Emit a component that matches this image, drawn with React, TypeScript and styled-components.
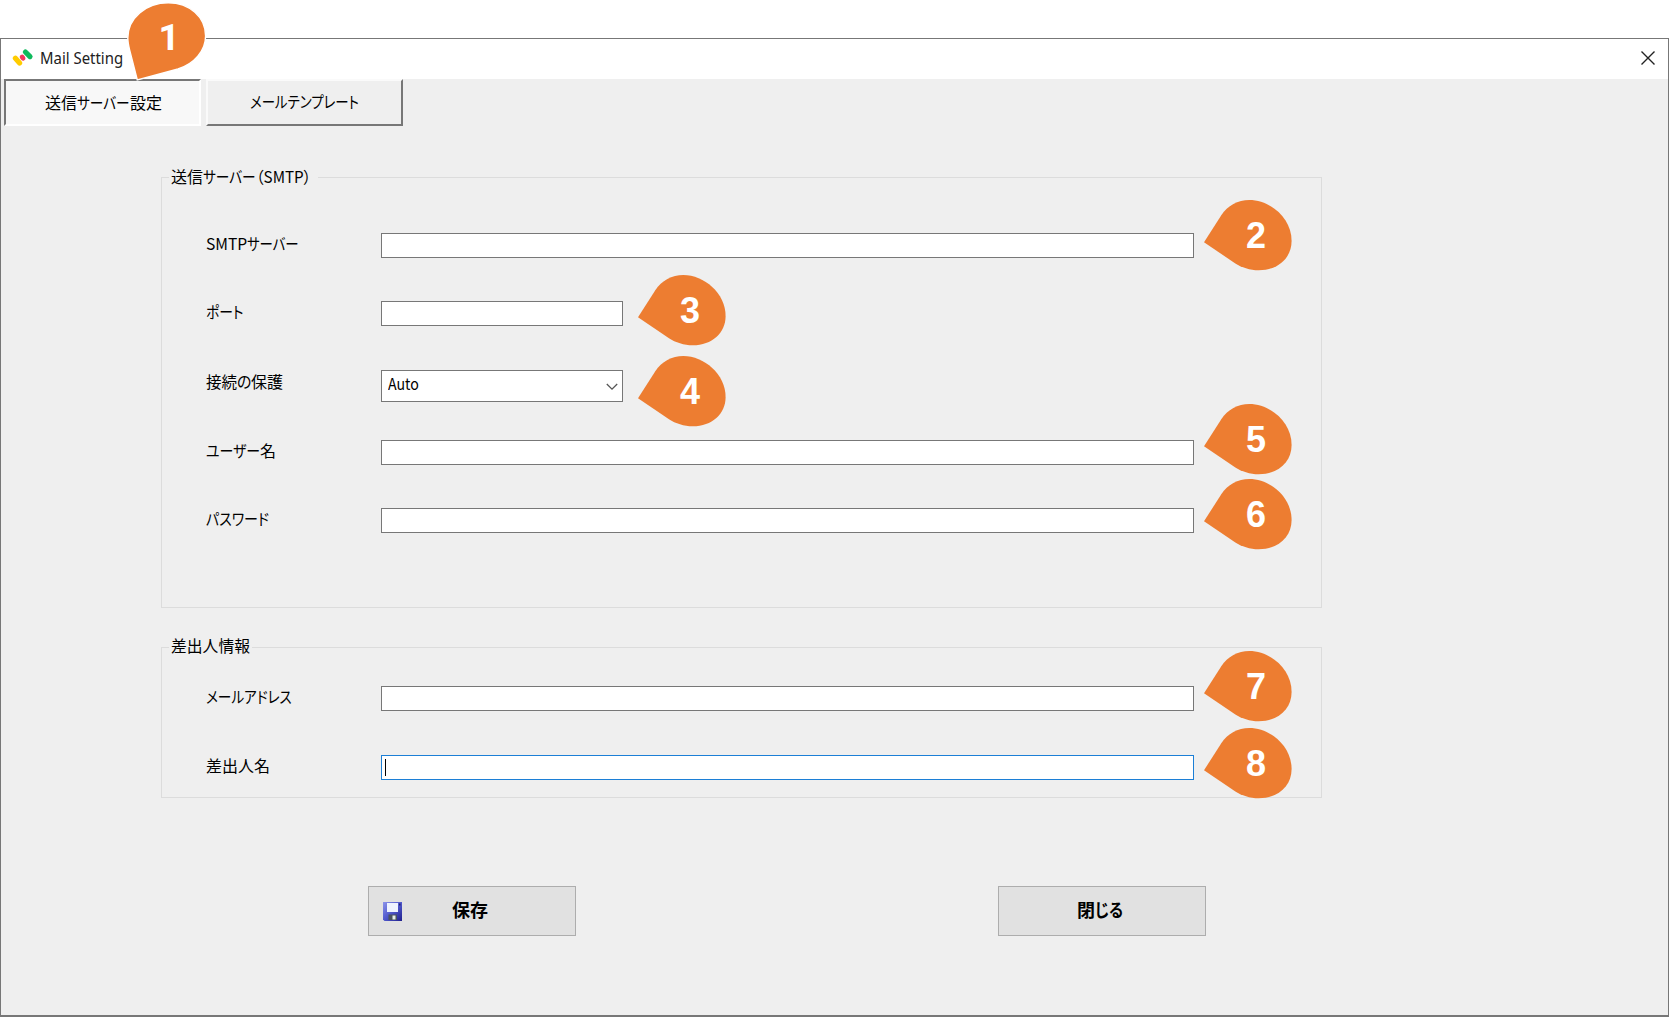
import React, { useLayoutEffect, useRef, useState } from 'react';
import styled, { createGlobalStyle, css } from 'styled-components';

const GlobalStyle = createGlobalStyle`
  * { box-sizing: border-box; }
  body {
    margin: 0;
    background: #fff;
    color: #000;
    font-family: "Noto Sans CJK JP", "Noto Sans", sans-serif;
    font-size: 16px;
  }
`;

const Page = styled.div`
  width: 1669px;
  height: 1017px;
  padding-top: 38px;
  overflow: hidden;
`;

const Window = styled.main`
  display: flex;
  flex-direction: column;
  height: 979px;
  background: #efefef;
  border: solid #777;
  border-width: 1px 1px 2px 1px;
`;

const TitleBar = styled.header`
  display: flex;
  align-items: center;
  flex: none;
  height: 40px;
  padding: 0 13px 2px 11px;
  background: #fff;
`;

const Title = styled.h1`
  flex: 1;
  display: flex;
  margin: 0 0 0 6px;
  font: 400 16px/22px "Noto Sans", sans-serif;
  color: #222;
`;

const CloseButton = styled.button`
  display: flex;
  padding: 0;
  border: 0;
  background: none;
`;

const Tabs = styled.nav`
  display: flex;
  flex: none;
  gap: 5px;
  height: 48px;
  padding-left: 3px;
`;

const Tab = styled.button<{ $active?: boolean }>`
  position: relative;
  display: flex;
  align-items: center;
  justify-content: center;
  width: 197px;
  height: 47px;
  color: #000;
  font: inherit;
  line-height: 24px;
  border: 2px solid;
  ${({ $active }) =>
    $active
      ? css`
          padding: 0 0 1px 2px;
          background: #f8f8f8;
          border-color: #777 #fff #fff #777;
        `
      : css`
          padding: 0 0 3px;
          background: #efefef;
          border-color: #fafafa #777 #777 #fafafa;
        `}
`;

const Group = styled.fieldset<{ $top: number; $height: number }>`
  display: flex;
  flex-direction: column;
  flex: none;
  width: 1161px;
  height: ${({ $height }) => $height}px;
  min-width: 0;
  margin: ${({ $top }) => $top}px 0 0 160px;
  padding: 0 0 0 43px;
  border: 1px solid #dcdcdc;
`;

const Legend = styled.div<{ $gap: number; $up: number; $after: number }>`
  display: flex;
  align-self: flex-start;
  flex: none;
  height: 24px;
  margin: -${({ $up }) => $up}px 0 ${({ $after }) => $after}px -36px;
  padding: 0 ${({ $gap }) => $gap}px 0 2px;
  line-height: 24px;
  background: #efefef;
`;

const Row = styled.div<{ $after: number }>`
  display: flex;
  flex: none;
  align-items: flex-start;
  margin-bottom: ${({ $after }) => $after}px;
`;

const Label = styled.label<{ $low?: boolean }>`
  display: flex;
  width: 176px;
  height: 24px;
  margin-top: ${({ $low }) => ($low ? -1 : -2)}px;
  padding-left: 1px;
  line-height: 24px;
`;

const Control = styled.div<{ $narrow?: boolean; $tall?: boolean; $focus?: boolean }>`
  position: relative;
  display: flex;
  align-items: center;
  width: ${({ $narrow }) => ($narrow ? 242 : 813)}px;
  height: ${({ $tall }) => ($tall ? 32 : 25)}px;
  background: #fff;
  border: 1px solid ${({ $focus }) => ($focus ? '#1c7fd6' : '#777')};
`;

const Caret = styled.span`
  width: 1px;
  height: 17px;
  margin-left: 3px;
  background: #000;
`;

const SelectValue = styled.span`
  display: flex;
  flex: 1;
  padding: 0 0 6px 6px;
  line-height: 24px;
`;

const Chevron = styled.svg`
  margin: 2px 4px 0 0;
`;

const Actions = styled.footer`
  display: flex;
  gap: 422px;
  margin: 88px 0 0 367px;
`;

const PushButton = styled.button`
  display: flex;
  align-items: center;
  width: 208px;
  height: 50px;
  padding: 0;
  color: #000;
  background: #e1e1e1;
  border: 1px solid #adadad;
  font: 700 18px/26px "Noto Sans CJK JP", sans-serif;
`;

const ButtonText = styled.span<{ $left: number }>`
  display: flex;
  margin: 0 0 4px ${({ $left }) => $left}px;
`;

const FloppySvg = styled.svg`
  flex: none;
  margin: 1px 0 0 14px;
`;

const Pin = styled.span<{ $top: number; $gap: number }>`
  position: absolute;
  left: calc(100% + ${({ $gap }) => $gap}px);
  top: ${({ $top }) => $top}px;
  z-index: 2;
  width: 88px;
  height: 71px;
`;

const TabPin = styled.span`
  position: absolute;
  left: 119px;
  top: -81px;
  z-index: 2;
  width: 84px;
  height: 84px;
`;

const PinDigit = styled.text<{ $flag?: boolean }>`
  fill: #fff;
  font-family: ${({ $flag }) => ($flag ? 'Roboto' : '"Liberation Sans"')}, Arial, sans-serif;
  font-size: ${({ $flag }) => ($flag ? 37 : 36)}px;
  font-weight: 700;
  text-anchor: middle;
`;

const Piece = styled.span`
  display: block;
  white-space: nowrap;
`;

const PieceInner = styled.span`
  display: inline-block;
  transform-origin: 0 50%;
  font-feature-settings: "palt";
`;

type Run = [string, number];

function FitRun({ text, width }: { text: string; width: number }) {
  const ref = useRef<HTMLSpanElement>(null);
  const [scale, setScale] = useState(1);
  useLayoutEffect(() => {
    if (ref.current) setScale(width / ref.current.offsetWidth);
  }, [text, width]);
  return (
    <Piece style={{ width }}>
      <PieceInner ref={ref} style={{ transform: `scaleX(${scale})` }}>
        {text}
      </PieceInner>
    </Piece>
  );
}

function Runs({ of }: { of: Run[] }) {
  return (
    <>
      {of.map(([text, width], i) => (
        <FitRun key={i} text={text} width={width} />
      ))}
    </>
  );
}

function Callout({ n, top, gap }: { n: number; top: number; gap: number }) {
  return (
    <Pin $top={top} $gap={gap}>
      <svg width="88" height="71" viewBox="0 0 88 71">
        <path
          d="M0 42.3 L17.3 15.2 C23.5 5.5 34 0 45.3 0 C66 0 87.6 18 87.6 41 C87.6 58 74 70.3 54.7 70.3 C46 70.3 37.5 67.4 31 63.2 Z"
          fill="#ed7d31"
        />
        <PinDigit x="52" y="48">{n}</PinDigit>
      </svg>
    </Pin>
  );
}

function FirstCallout() {
  return (
    <TabPin>
      <svg width="84" height="84" viewBox="0 0 84 84">
        <path
          d="M12.3 80 L4.6 50 C3.4 45 2.8 41 2.8 38 C2.8 18 21 2.8 43.3 2.8 C64.5 2.8 80.6 17 80.6 36 C80.6 51 69 64 53 69 Z"
          fill="#ed7d31"
          stroke="#fff"
          strokeWidth="1.4"
        />
        <PinDigit $flag x="44.2" y="50.3">1</PinDigit>
      </svg>
    </TabPin>
  );
}

function AppLogo() {
  return (
    <svg width="22" height="20" viewBox="0 0 22 20">
      <g strokeLinecap="round" strokeWidth="5.2">
        <path d="M3.4 10.2 L7.6 15" stroke="#fc0" />
        <path d="M13.4 4 L18 8.6" stroke="#0fba5c" />
      </g>
      <ellipse cx="10.6" cy="9.6" rx="2.5" ry="3.1" fill="#f5365c" transform="rotate(-35 10.6 9.6)" />
    </svg>
  );
}

function Floppy() {
  return (
    <FloppySvg width="19" height="19" viewBox="0 0 19 19">
      <defs>
        <linearGradient id="disk" x1="0" y1="0" x2="1" y2="1">
          <stop offset="0" stopColor="#8c94ea" />
          <stop offset=".5" stopColor="#5058cc" />
          <stop offset="1" stopColor="#20208c" />
        </linearGradient>
      </defs>
      <path d="M0 0 H19 V19 H1.5 L0 17.5 Z" fill="url(#disk)" />
      <rect x="4" y="1" width="11" height="9" fill="#eef3ff" />
      <rect x="16" y="1.5" width="1.5" height="2" fill="#22226e" />
      <rect x="5.5" y="12.5" width="8.5" height="5.5" fill="#4b5360" />
      <rect x="9.5" y="13.5" width="3" height="4" fill="#e4eee8" />
    </FloppySvg>
  );
}

type FieldProps = {
  label: Run[];
  after: number;
  pin: number;
  pinTop: number;
  narrow?: boolean;
  tall?: boolean;
  focus?: boolean;
  children?: React.ReactNode;
};

function Field({ label, after, pin, pinTop, narrow, tall, focus, children }: FieldProps) {
  return (
    <Row $after={after}>
      <Label $low={tall}>
        <Runs of={label} />
      </Label>
      <Control $narrow={narrow} $tall={tall} $focus={focus}>
        {children}
        <Callout n={pin} top={pinTop} gap={narrow ? 16.3 : 10.7} />
      </Control>
    </Row>
  );
}

export default function App() {
  return (
    <>
      <GlobalStyle />
      <Page>
        <Window>
          <TitleBar>
            <AppLogo />
            <Title>
              <Runs of={[['Mail Setting', 83]]} />
            </Title>
            <CloseButton aria-label="Close">
              <svg width="14" height="14" viewBox="0 0 14 14" stroke="#222" strokeWidth="1.4">
                <path d="M.5 .5 L13.5 13.5 M13.5 .5 L.5 13.5" />
              </svg>
            </CloseButton>
          </TitleBar>

          <Tabs>
            <Tab $active>
              <Runs of={[['送信', 32], ['サーバー', 53], ['設定', 32]]} />
              <FirstCallout />
            </Tab>
            <Tab>
              <Runs of={[['メールテンプレート', 109]]} />
            </Tab>
          </Tabs>

          <Group $top={50} $height={431}>
            <Legend $gap={7} $up={14} $after={45}>
              <Runs of={[['送信', 32], ['サーバー', 53], ['（SMTP）', 55]]} />
            </Legend>
            <Field label={[['SMTP', 41], ['サーバー', 52]]} after={43} pin={2} pinTop={-34.3} />
            <Field label={[['ポート', 38]]} after={44} pin={3} pinTop={-26.7} narrow />
            <Field label={[['接続', 31], ['の', 14], ['保護', 32]]} after={38} pin={4} pinTop={-15.3} narrow tall>
              <SelectValue>
                <Runs of={[['Auto', 31]]} />
              </SelectValue>
              <Chevron width="12" height="8" viewBox="0 0 12 8" fill="none" stroke="#555" strokeWidth="1.3">
                <path d="M.8 1 L6 6.2 L11.2 1" />
              </Chevron>
            </Field>
            <Field label={[['ユーザー', 54], ['名', 16]]} after={43} pin={5} pinTop={-37.3} />
            <Field label={[['パスワード', 63]]} after={0} pin={6} pinTop={-29.7} />
          </Group>

          <Group $top={39} $height={151}>
            <Legend $gap={2} $up={15} $after={29}>
              <Runs of={[['差出人情報', 79]]} />
            </Legend>
            <Field label={[['メールアドレス', 86]]} after={44} pin={7} pinTop={-36} />
            <Field label={[['差出人名', 64]]} after={0} pin={8} pinTop={-28.3} focus>
              <Caret />
            </Field>
          </Group>

          <Actions>
            <PushButton>
              <Floppy />
              <ButtonText $left={50}>
                <Runs of={[['保存', 36]]} />
              </ButtonText>
            </PushButton>
            <PushButton>
              <ButtonText $left={78}>
                <Runs of={[['閉', 18], ['じる', 28]]} />
              </ButtonText>
            </PushButton>
          </Actions>
        </Window>
      </Page>
    </>
  );
}
